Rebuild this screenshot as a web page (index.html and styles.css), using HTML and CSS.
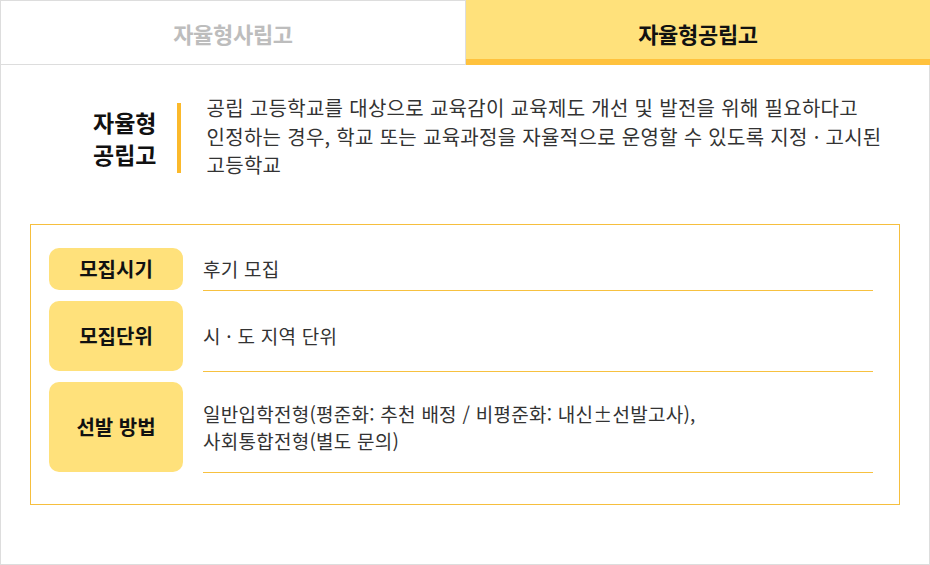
FILE: index.html
```html
<!DOCTYPE html>
<html lang="ko">
<head>
    <meta charset="UTF-8">
    <meta content="width=device-width, initial-scale=1.0" name="viewport">
    <title>자율형공립고</title>
    <link rel="stylesheet" href="styles.css">
</head>
<body>

<!-- Tabs -->
<div class="tabs">
    <div class="tab">자율형사립고</div>
    <div class="tab tab-on">자율형공립고</div>
</div>

<div class="panel">
    <!-- Definition -->
    <div class="intro">
        <h2 class="intro-title">자율형<br>공립고</h2>
        <span class="intro-bar"></span>
        <p class="intro-text">공립 고등학교를 대상으로 교육감이 교육제도 개선 및 발전을 위해 필요하다고<br>인정하는 경우, 학교 또는 교육과정을 자율적으로 운영할 수 있도록 지정 · 고시된<br>고등학교</p>
    </div>

    <!-- Admission info -->
    <div class="info-box">
        <div class="info-row row-sm">
            <div class="info-label">모집시기</div>
            <div class="info-value">후기 모집</div>
        </div>
        <div class="info-row row-md">
            <div class="info-label">모집단위</div>
            <div class="info-value">시 · 도 지역 단위</div>
        </div>
        <div class="info-row row-lg">
            <div class="info-label">선발 방법</div>
            <div class="info-value">일반입학전형(평준화: 추천 배정 / 비평준화: 내신±선발고사),<br>사회통합전형(별도 문의)</div>
        </div>
    </div>
</div>

</body>
</html>
```

FILE: styles.css
```css
* {
    box-sizing: border-box;
}
body {
    margin: 0;
    width: 930px;
    font-family: "Noto Sans CJK KR", "Noto Sans", sans-serif;
    color: #333;
    background-color: #fff;
}
.tabs {
    display: flex;
    height: 65px;
}
.tab {
    flex: 1;
    display: flex;
    align-items: center;
    justify-content: center;
    border: 1px solid #ddd;
    font-size: 22px;
    font-weight: bold;
    letter-spacing: -0.3px;
    color: #bdbdbd;
}
.tab-on {
    border: none;
    background-color: #ffe17b;
    box-shadow: inset 0 -6px 0 #ffc23d;
    color: #111;
}
.panel {
    height: 500px;
    border: 1px solid #ddd;
    border-top: none;
    padding-top: 29px;
}
.intro {
    display: flex;
    align-items: center;
    padding-left: 92px;
}
.intro-title {
    margin: 0;
    padding-top: 2px;
    font-size: 23px;
    line-height: 32px;
    text-align: right;
    color: #111;
}
.intro-bar {
    width: 4px;
    height: 70px;
    margin: 3px 25px 0 21px;
    background-color: #fbb92b;
}
.intro-text {
    margin: 0;
    font-size: 20px;
    line-height: 28.5px;
    letter-spacing: 0.3px;
    color: #333;
}
.info-box {
    margin: 44px 0 0 29px;
    width: 870px;
    border: 1px solid #f6bf3e;
    padding: 23px 26px 31px 18px;
    display: flex;
    flex-direction: column;
    gap: 10px;
}
.info-row {
    display: grid;
    grid-template-columns: 134px 1fr;
    column-gap: 20px;
}
.row-sm {
    height: 43px;
}
.row-md {
    height: 71px;
}
.row-lg {
    height: 91px;
}
.info-label {
    display: flex;
    align-items: center;
    justify-content: center;
    margin-bottom: 1px;
    border-radius: 10px;
    background-color: #ffe17b;
    font-size: 20px;
    font-weight: bold;
    color: #111;
}
.info-value {
    display: flex;
    align-items: center;
    border-bottom: 1px solid #f7c140;
    font-size: 19px;
    line-height: 27px;
    letter-spacing: 0.25px;
    color: #333;
}
```
